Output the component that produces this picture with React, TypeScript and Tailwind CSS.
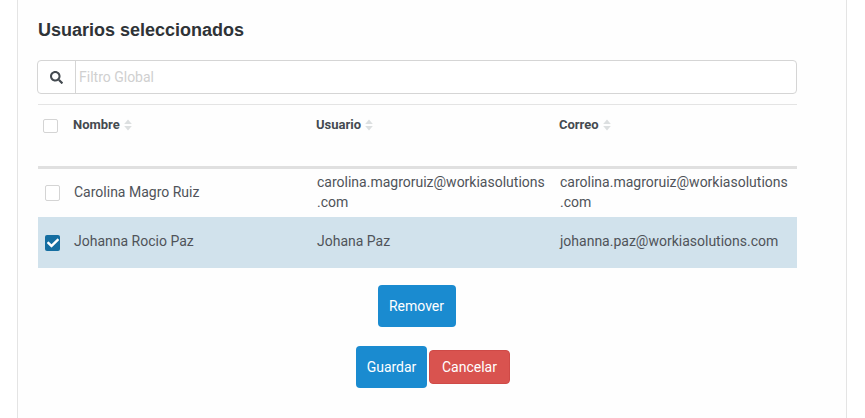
import { FaSearch, FaCheck } from "react-icons/fa";

function Sort() {
  return (
    <svg width="8" height="12" viewBox="0 0 8 12" className="ml-[4px] inline-block">
      <path d="M4 0.5 L7.8 5 L0.2 5 Z" fill="#dcdfe0" />
      <path d="M4 11.5 L7.8 7 L0.2 7 Z" fill="#dcdfe0" />
    </svg>
  );
}

function Box({ checked, short }: { checked?: boolean; short?: boolean }) {
  return checked ? (
    <div className="flex h-[16px] w-[15px] items-center justify-center rounded-[2px] bg-[#156ea1]">
      <FaCheck size={12} color="#ffffff" />
    </div>
  ) : (
    <div className={`w-[15px] rounded-[2px] border border-[#d4d4d4] bg-white ${short ? "h-[14px]" : "h-[16px]"}`} />
  );
}

function Header({ label }: { label: string }) {
  return (
    <div className="flex h-[14px] items-center pl-[7px] text-[13px] font-bold leading-[14px] text-[#444a50]">
      {label}
      <Sort />
    </div>
  );
}

function Cell({ children }: { children: React.ReactNode }) {
  return <div className="pl-[8px] pr-[6px] leading-[20px] [overflow-wrap:anywhere]">{children}</div>;
}

export default function App() {
  return (
    <div className="h-[418px] w-[865px] overflow-hidden bg-white font-['Roboto',sans-serif] text-[14px] text-[#4f5359]">
      <div className="ml-[17px] h-[418px] w-[830px] border-x border-[#e4e4e4] bg-[#fefefe] pl-[20px] pt-[20px]">
        <h2 className="font-['Liberation_Sans',sans-serif] text-[18px] font-bold leading-[20px] text-[#2f3337]">Usuarios seleccionados</h2>
        <div className="-ml-[1px] mt-[20px] flex h-[34px] w-[760px] rounded-[4px] border border-[#d5d5d5] bg-white">
          <div className="flex w-[38px] items-center justify-center border-r border-[#d5d5d5]">
            <FaSearch size={13} color="#444a50" />
          </div>
          <div className="flex items-center pl-[3px] text-[14px] text-[#d0d0d0]">Filtro Global</div>
        </div>
        <div className="mt-[10px] w-[759px]">
          <div className="grid h-[62px] grid-cols-[28px_243px_243px_245px] border-t border-[#e4e4e4] pt-[13px]">
            <div className="pl-[5px] pt-[1px]"><Box short /></div>
            <Header label="Nombre" />
            <Header label="Usuario" />
            <Header label="Correo" />
          </div>
          <div className="h-[3px] bg-[#e0e0e0]" />
          <div className="grid h-[48px] grid-cols-[28px_243px_243px_245px] items-center pb-[2px]">
            <div className="pl-[7px] pt-[2px]"><Box /></div>
            <Cell>Carolina Magro Ruiz</Cell>
            <Cell>carolina.magroruiz@workiasolutions.com</Cell>
            <Cell>carolina.magroruiz@workiasolutions.com</Cell>
          </div>
          <div className="grid h-[51px] grid-cols-[28px_243px_243px_245px] items-center bg-[#d1e2ec] pb-[4px]">
            <div className="pl-[7px] pt-[4px]"><Box checked /></div>
            <Cell>Johanna Rocio Paz</Cell>
            <Cell>Johana Paz</Cell>
            <Cell>johanna.paz@workiasolutions.com</Cell>
          </div>
          <div className="mt-[17px] flex justify-center pr-[2px]">
            <button className="h-[42px] w-[78px] rounded-[4px] bg-[#1a8bd0] text-white">Remover</button>
          </div>
          <div className="mt-[19px] flex items-center justify-center gap-[2px] pl-[31px]">
            <button className="h-[42px] w-[71px] rounded-[4px] bg-[#1a8bd0] text-white">Guardar</button>
            <button className="h-[34px] w-[81px] rounded-[4px] border border-[#cf4a47] bg-[#d9534f] text-white">Cancelar</button>
          </div>
        </div>
      </div>
    </div>
  );
}
